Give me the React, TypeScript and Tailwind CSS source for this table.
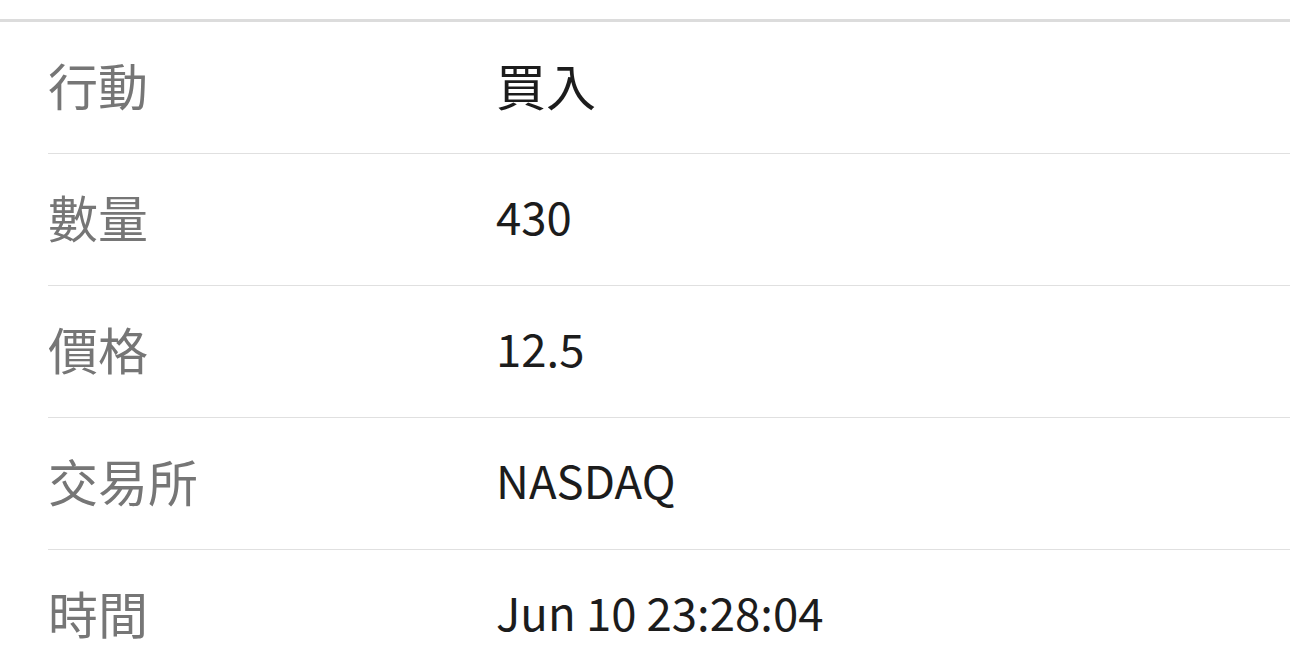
const rows = [
  { label: "行動", value: "買入", cjk: true },
  { label: "數量", value: "430" },
  { label: "價格", value: "12.5" },
  { label: "交易所", value: "NASDAQ" },
  { label: "時間", value: "Jun 10 23:28:04" },
];

export default function App() {
  return (
    <div
      className="min-h-screen bg-white pt-[19px]"
      style={{ fontFamily: '"Noto Sans CJK TC", "Noto Sans", sans-serif' }}
    >
      <div className="border-t-[3px] border-[#dcdcdc]">
        <div className="ml-12">
          {rows.map((row) => (
            <div
              key={row.label}
              className="flex h-[132px] items-center border-b border-[#e0e0e0] pb-2"
            >
              <div className="w-[448px] text-[50px] leading-none text-[#767676]">
                {row.label}
              </div>
              <div
                className={
                  row.cjk
                    ? "text-[50px] leading-none text-[#1c1c1c]"
                    : "text-[45.5px] leading-none text-[#1c1c1c]"
                }
              >
                {row.value}
              </div>
            </div>
          ))}
        </div>
      </div>
    </div>
  );
}
